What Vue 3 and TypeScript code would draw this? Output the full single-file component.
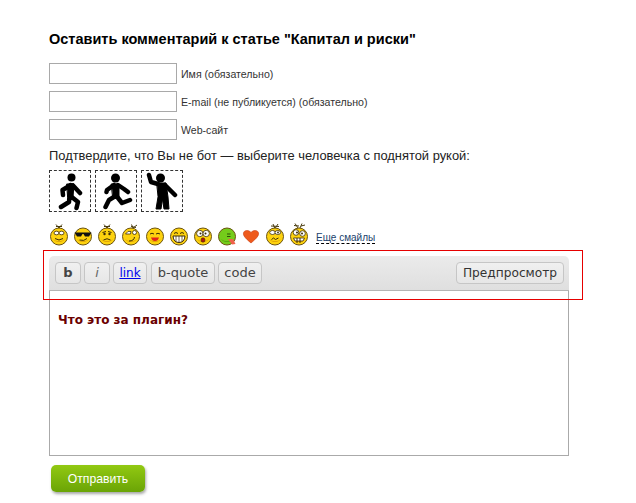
<template>
  <div class="page">
    <h3 class="title">Оставить комментарий к статье "Капитал и риски"</h3>

    <div v-for="field in fields" :key="field" class="field">
      <input type="text" class="field-input" />
      <label class="field-label">{{ field }}</label>
    </div>

    <p class="captcha-text">Подтвердите, что Вы не бот — выберите человечка с поднятой рукой:</p>
    <div class="captcha">
      <div class="captcha-item">
        <svg width="40" height="40" viewBox="0 0 40 40" class="figure">
          <circle cx="21.5" cy="6.5" r="4" />
          <path d="M20.5 14 L19.5 25 M20 14.5 L12.5 19 L13 24 M23 14.5 L30 22 M19.5 25 L19 31 L11 36 M20.5 25 L28 31 L26.5 37" />
          <path class="torso" d="M17 13 L24 13 L23 26 L18 26 Z" />
        </svg>
      </div>
      <div class="captcha-item">
        <svg width="40" height="40" viewBox="0 0 40 40" class="figure">
          <circle cx="19.5" cy="7" r="4.5" />
          <path d="M18 14 L11 19 L10.5 21 M22 14 L28 18 L32 21 M19.5 25 L13 29 L9.5 36 M20.5 25 L26 32 L34 29" />
          <path class="torso" d="M15.5 13 L23 13 L23 26 L17 26 Z" />
        </svg>
      </div>
      <div class="captcha-item">
        <svg width="40" height="40" viewBox="0 0 40 40" class="figure">
          <circle cx="18.5" cy="7" r="4.5" />
          <path d="M16 13 L9 11 L7 4 M23 14 L33 24" />
          <path class="torso" d="M15 12 L24 12 L26 26 L27 38 L22 38 L20.5 28 L19 38 L14 38 L16 26 Z" />
        </svg>
      </div>
    </div>

    <div class="smileys">
      <svg v-for="(face, i) in faces" :key="i" width="24" height="24" viewBox="0 0 24 24" class="smiley">
        <g v-if="face.heart">
          <path d="M12 20 C6 15 4 12.5 4.5 10 C5 7 9.5 6.5 12 9.5 C14.5 6.5 19 7 19.5 10 C20 12.5 18 15 12 20 Z" fill="#ee5a1c" stroke="#c93a10" stroke-width=".6" />
        </g>
        <g v-else>
          <path v-if="face.hair" :d="face.hair" fill="none" stroke="#4a3c10" stroke-width="1" />
          <circle cx="12" cy="13.5" r="8.5" :fill="face.green ? '#74cc1a' : '#fdd20e'" stroke="#6b5310" stroke-width="1" />
          <path d="M6 16 A7.5 7.5 0 0 0 18 16 A9 9 0 0 1 6 16 Z" :fill="face.green ? '#4c9a0c' : '#d99a06'" />
          <g v-html="face.parts"></g>
        </g>
      </svg>
      <a class="more">Еще смайлы</a>
    </div>

    <div class="editor">
      <div class="toolbar">
        <button class="tool tool-b">b</button>
        <button class="tool tool-i">i</button>
        <button class="tool tool-link">link</button>
        <button class="tool tool-quote">b-quote</button>
        <button class="tool tool-code">code</button>
        <button class="tool tool-preview">Предпросмотр</button>
      </div>
      <div class="editor-body">Что это за плагин?</div>
    </div>

    <button class="submit">Отправить</button>

    <div class="highlight"></div>
  </div>
</template>

<script setup lang="ts">
interface Face {
  parts?: string;
  hair?: string;
  green?: boolean;
  heart?: boolean;
}

const fields: string[] = [
  "Имя (обязательно)",
  "E-mail (не публикуется) (обязательно)",
  "Web-сайт"
];

const sprig = "M12 5 L9 1.5 M12 5 L15 1.5 M9 3.5 L15 3.5";
const dark = "#3c2c06";

const faces: Face[] = [
  {
    hair: sprig,
    parts: `<ellipse cx="9.5" cy="10" rx="2.5" ry="1.8" fill="#fff" stroke="${dark}" stroke-width=".8"/><ellipse cx="14.5" cy="10" rx="2.5" ry="1.8" fill="#fff" stroke="${dark}" stroke-width=".8"/><path d="M8 15.5 Q12 18.5 16 15.5" fill="none" stroke="${dark}" stroke-width="1"/>`
  },
  {
    parts: `<path d="M3.5 9.5 H20.5 L19.5 11 L18 13.5 H14 L12.5 11 H11.5 L10 13.5 H6 L4.5 11 Z" fill="#111"/><path d="M8.5 17 Q13 18.5 16 15.5" fill="none" stroke="${dark}" stroke-width="1"/>`
  },
  {
    hair: sprig,
    parts: `<path d="M7.5 9.5 L11 8.5 M16.5 9.5 L13 8.5" stroke="${dark}" stroke-width="1"/><circle cx="9.5" cy="11" r="1.2" fill="${dark}"/><circle cx="14.5" cy="11" r="1.2" fill="${dark}"/><path d="M8.5 17 Q12 14.5 15.5 17" fill="none" stroke="${dark}" stroke-width="1"/>`
  },
  {
    hair: "M14 5 L12.5 1.5 M14 5 L18 2 M12 3.5 L17 4.5",
    parts: `<path d="M6.5 11 Q9 7 12 8.5 L11.5 11 Z" fill="#fff" stroke="${dark}" stroke-width=".8"/><circle cx="15.5" cy="9.5" r="2" fill="#fff" stroke="${dark}" stroke-width=".8"/><path d="M10 18 Q15 18 15.5 14" fill="none" stroke="${dark}" stroke-width="1"/>`
  },
  {
    parts: `<path d="M7 11 Q9 9.5 11 11 M13 11 Q15 9.5 17 11" fill="none" stroke="${dark}" stroke-width="1"/><path d="M8 14.5 H16 Q15 18 12 18 Q9 18 8 14.5 Z" fill="#e2231a"/>`
  },
  {
    parts: `<path d="M7 10.5 Q9 8.5 11 10.5 M13 10.5 Q15 8.5 17 10.5" fill="none" stroke="${dark}" stroke-width="1"/><path d="M6 13 H18 Q17.5 19.5 12 19.5 Q6.5 19.5 6 13 Z" fill="#fff" stroke="${dark}" stroke-width="1"/><path d="M9 13 V19 M12 13 V19.5 M15 13 V19" stroke="${dark}" stroke-width=".7"/>`
  },
  {
    parts: `<circle cx="8.8" cy="10.5" r="3.2" fill="#fff" stroke="${dark}" stroke-width=".8"/><circle cx="15.2" cy="10.5" r="3.2" fill="#fff" stroke="${dark}" stroke-width=".8"/><circle cx="9.5" cy="10.5" r="1" fill="${dark}"/><circle cx="14.5" cy="10.5" r="1" fill="${dark}"/><ellipse cx="12" cy="17" rx="2" ry="2.2" fill="#b3160e" stroke="${dark}" stroke-width=".6"/>`
  },
  {
    green: true,
    parts: `<path d="M12 11 H15.5 M12 13.5 H15.5" stroke="#2c5406" stroke-width="1"/><path d="M13 16 H18 L20.5 21 L17 21.5 Z" fill="#f0604c"/>`
  },
  { heart: true },
  {
    hair: "M12 5.5 L10 1 M12 5.5 L15 1 M8 3 L16 3.5",
    parts: `<ellipse cx="9.5" cy="9.5" rx="2.8" ry="2" fill="#fff" stroke="${dark}" stroke-width=".8"/><ellipse cx="14.8" cy="9.5" rx="2.8" ry="2" fill="#fff" stroke="${dark}" stroke-width=".8"/><circle cx="15" cy="9.5" r=".9" fill="${dark}"/><path d="M8.5 16.5 L10.5 15 L12.5 16.5 L15.5 15" fill="none" stroke="${dark}" stroke-width="1"/>`
  },
  {
    hair: "M11 5 L8 0.5 M13 5 L15 0.5 M7 2.5 L12 3 M14 3 L18 2",
    parts: `<circle cx="9" cy="9.5" r="2.8" fill="#fff" stroke="${dark}" stroke-width=".8"/><circle cx="15.5" cy="10.5" r="2.8" fill="#fff" stroke="${dark}" stroke-width=".8"/><circle cx="10" cy="9.5" r="1" fill="${dark}"/><circle cx="15" cy="10.5" r="1" fill="${dark}"/><path d="M6.5 15 L17.5 15 L16 18 H8 Z" fill="#fff" stroke="${dark}" stroke-width=".8"/><path d="M10 15 V20 M13 15 V20" stroke="${dark}" stroke-width="1"/>`
  }
];
</script>

<style>
html,
body {
  background: #fff;
}
</style>

<style scoped>
.page {
  position: relative;
  box-sizing: border-box;
  width: 636px;
  height: 503px;
  padding: 30px 0 0 49px;
  font-family: "Liberation Sans", Arial, sans-serif;
  color: #000;
  overflow: hidden;
}

.title {
  margin: 0 0 14px;
  font-size: 14.5px;
  line-height: 19px;
  font-weight: bold;
}

.field {
  display: flex;
  align-items: center;
  height: 21px;
  margin-bottom: 7px;
}

.field-input {
  box-sizing: border-box;
  width: 128px;
  height: 21px;
  margin: 0;
  border: 1px solid #a9a9a9;
  background: #fff;
}

.field-label {
  margin-left: 4px;
  font-size: 10.6px;
  color: #333;
}

.captcha-text {
  margin: 0;
  padding-top: 1px;
  font-size: 12.9px;
  line-height: 16px;
  color: #222;
}

.captcha {
  display: flex;
  gap: 4px;
  margin-top: 6px;
}

.captcha-item {
  width: 40px;
  height: 40px;
  border: 1px dashed #333;
}

.figure {
  display: block;
  filter: blur(0.6px);
}

.figure circle {
  fill: #000;
}

.figure path {
  fill: none;
  stroke: #000;
  stroke-width: 4.5;
  stroke-linecap: round;
  stroke-linejoin: round;
}

.figure .torso {
  fill: #000;
  stroke-width: 1;
}

.smileys {
  display: flex;
  align-items: center;
  margin: 11px 0 0 -2px;
  height: 24px;
}

.smiley {
  display: block;
  flex: none;
}

.more {
  margin: 6px 0 0 5px;
  font-size: 10px;
  line-height: 11px;
  color: #20416b;
  border-bottom: 1px dashed #000;
  cursor: pointer;
}

.editor {
  width: 520px;
  margin-top: 9px;
}

.toolbar {
  box-sizing: border-box;
  display: flex;
  align-items: center;
  height: 35px;
  padding: 0 5px 0 6px;
  border-radius: 5px 5px 0 0;
  border-bottom: 1px solid #b4b4b4;
  background: linear-gradient(#ebebeb, #dfdfdf);
}

.tool {
  box-sizing: border-box;
  height: 22px;
  margin: 0 3px 0 0;
  padding: 0;
  border: 1px solid #c6c6c6;
  border-radius: 4px;
  background: linear-gradient(#f0f0f0, #e6e6e6);
  font-family: "DejaVu Sans", Verdana, sans-serif;
  font-size: 13px;
  line-height: 18px;
  color: #444;
}

.tool-b {
  width: 26px;
  font-weight: bold;
}

.tool-i {
  width: 26px;
  font-style: italic;
  color: #666;
}

.tool-link {
  width: 34px;
  margin-right: 4px;
  font-size: 12px;
  color: #0000ee;
  text-decoration: underline;
}

.tool-quote {
  width: 64px;
}

.tool-code {
  width: 44px;
}

.tool-preview {
  width: 108px;
  margin: 0 0 0 auto;
  font-size: 12.2px;
  color: #333;
}

.editor-body {
  box-sizing: border-box;
  height: 165px;
  padding: 21px 8px 0;
  border: 1px solid #aaa;
  border-top: none;
  background: #fff;
  font-family: "DejaVu Sans", Verdana, sans-serif;
  font-size: 12px;
  line-height: 16px;
  font-weight: bold;
  color: #6b0000;
}

.submit {
  display: block;
  box-sizing: border-box;
  width: 94px;
  height: 27px;
  margin: 9px 0 0 2px;
  padding: 0;
  border: none;
  border-radius: 5px;
  background: linear-gradient(#92c912, #6aa406);
  box-shadow: 1px 2px 3px rgba(0, 0, 0, 0.35);
  font-family: "Liberation Sans", Arial, sans-serif;
  font-size: 12.2px;
  color: #fff;
}

.highlight {
  position: absolute;
  left: 43px;
  top: 250px;
  box-sizing: border-box;
  width: 540px;
  height: 50px;
  border: 1px solid #e60000;
  pointer-events: none;
}
</style>
